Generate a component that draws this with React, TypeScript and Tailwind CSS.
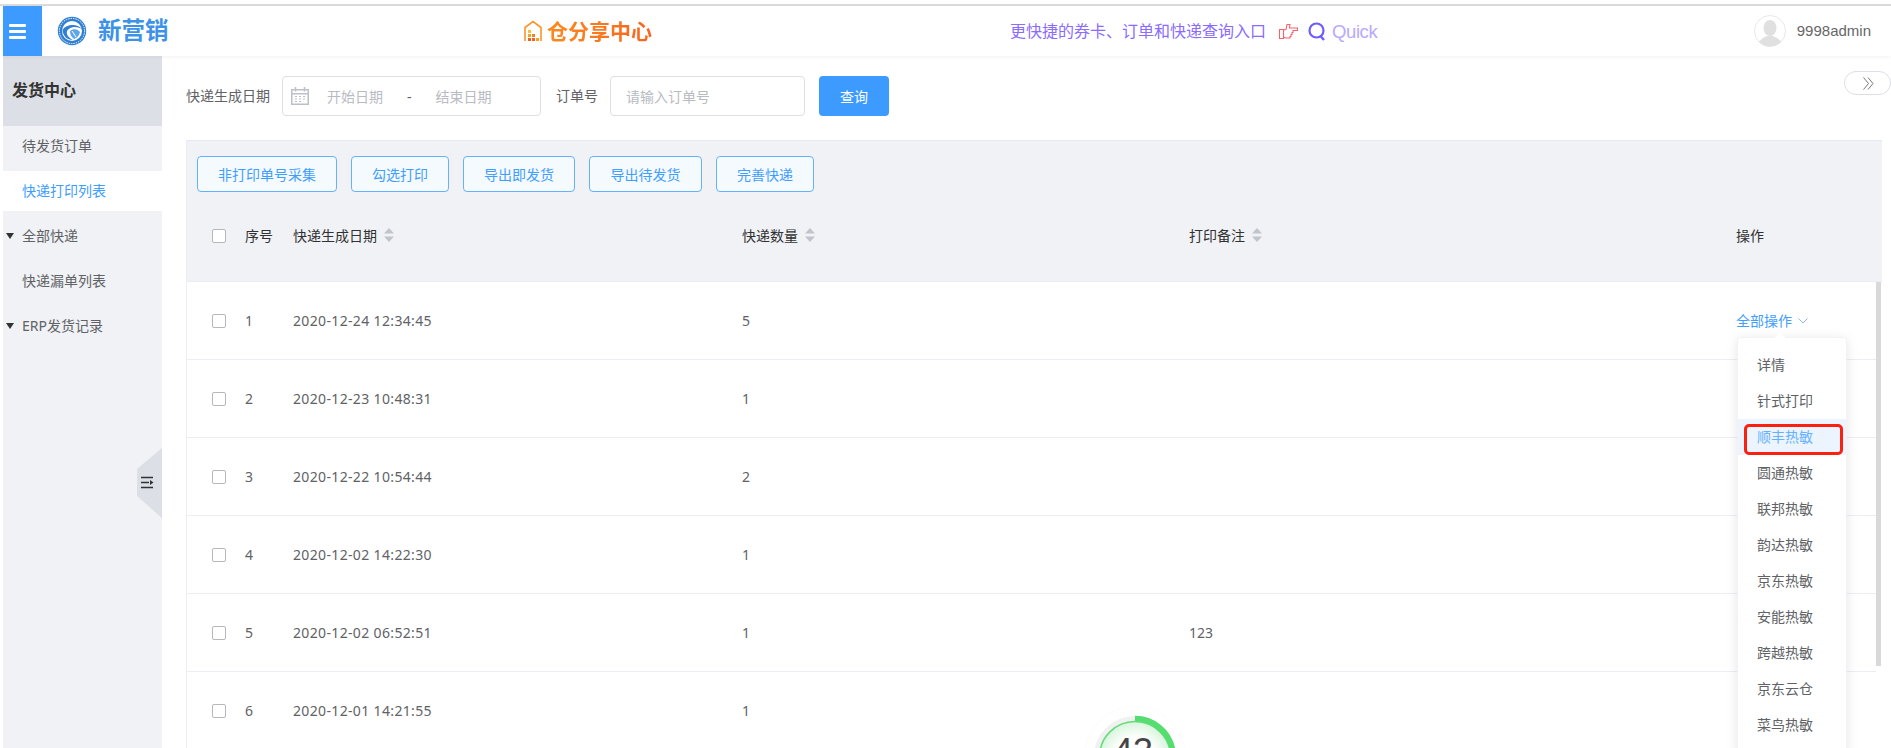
import React from "react";

const Caret = () => (
  <svg width="10" height="14" viewBox="0 0 10 14" className="ml-[7px] shrink-0">
    <path d="M5 0 L10 5.5 H0 Z M5 14 L10 8.5 H0 Z" fill="#c0c4cc" />
  </svg>
);

const Check = () => <span className="block w-[14px] h-[14px] border border-[#b4b7bd] rounded-[2px] bg-white" />;

const Tri = () => (
  <svg width="8" height="6" viewBox="0 0 8 6" className="absolute left-[6px] top-1/2 -translate-y-1/2">
    <path d="M0 0 H8 L4 6 Z" fill="#333" />
  </svg>
);

const Logo = () => (
  <svg width="30" height="30" viewBox="0 0 30 30" className="shrink-0">
    <circle cx="15" cy="15" r="14.2" fill="#2f7fd3" />
    <circle cx="15" cy="15" r="12.6" fill="none" stroke="#fff" strokeWidth="1" strokeDasharray="1.4 1" />
    <circle cx="15" cy="15" r="10" fill="#fff" />
    <path d="M5.5 14 C9 8 20 7 25 13 C20 10 13 10 10 15 C9 19 12 22 16 24 C10 24 6 20 5.5 14 Z" fill="#2f7fd3" />
    <path d="M13 15 C16 12 21 13 23 16 C22 20 20 22 17 23 C14 21 13 18 13 15 Z" fill="#5fa6e6" />
    <path d="M15 15 L19 21" stroke="#fff" strokeWidth="1" />
  </svg>
);

const House = () => (
  <svg width="18" height="22" viewBox="0 0 18 22" className="shrink-0">
    <path d="M1 21 V7.5 L9 1.5 L17 7.5 V21" fill="none" stroke="#f9952a" strokeWidth="1.6" />
    <rect x="4" y="18" width="3" height="3" fill="#f0641e" />
    <rect x="8" y="18" width="3" height="3" fill="#f0641e" />
    <rect x="12" y="18" width="3" height="3" fill="#f6a12b" />
    <rect x="4" y="14" width="3" height="3" fill="#f6a12b" />
    <rect x="8" y="14" width="3" height="3" fill="#f0841e" />
    <rect x="4" y="10" width="3" height="3" fill="#fbc02d" />
  </svg>
);

const Hand = () => (
  <svg width="19" height="15" viewBox="0 0 19 15" className="shrink-0">
    <path
      d="M0.5 5.5 H4.5 V14.5 H0.5 Z M4.5 6 L7 5.5 L8 0.5 L11 0.5 L10.5 4 H18.5 V6.5 H14 V8.5 H13 V10.5 H12 V12.5 H11 V14 H6.5 L4.5 13"
      fill="none"
      stroke="#f8626c"
      strokeWidth="1.1"
    />
  </svg>
);

const CalendarIcon = () => (
  <svg width="18" height="18" viewBox="0 0 18 18" className="shrink-0">
    <path d="M0.75 2.75 H17.25 V17.25 H0.75 Z M0.75 6.75 H17.25" fill="none" stroke="#bcc0c8" strokeWidth="1.5" />
    <path d="M4.5 0 V4.5 M13.5 0 V4.5" stroke="#bcc0c8" strokeWidth="1.5" />
    <path d="M4 9.5 H6 M8 9.5 H10 M12 9.5 H14 M4 12 H6 M8 12 H10 M12 12 H14 M4 14.5 H6 M8 14.5 H10" stroke="#bcc0c8" strokeWidth="1.2" />
  </svg>
);

const rows = [
  ["1", "2020-12-24 12:34:45", "5", ""],
  ["2", "2020-12-23 10:48:31", "1", ""],
  ["3", "2020-12-22 10:54:44", "2", ""],
  ["4", "2020-12-02 14:22:30", "1", ""],
  ["5", "2020-12-02 06:52:51", "1", "123"],
  ["6", "2020-12-01 14:21:55", "1", ""],
];

const menu = ["详情", "针式打印", "顺丰热敏", "圆通热敏", "联邦热敏", "韵达热敏", "京东热敏", "安能热敏", "跨越热敏", "京东云仓", "菜鸟热敏"];
const tools = [
  ["非打印单号采集", "w-[140px]"],
  ["勾选打印", "w-[98px]"],
  ["导出即发货", "w-[112px]"],
  ["导出待发货", "w-[113px]"],
  ["完善快递", "w-[98px]"],
];

const Dropdown = () => (
  <div className="absolute left-[1px] top-[27px] z-10 w-[110px] bg-white rounded-[4px] border border-[#f2f3f6] shadow-[0_2px_12px_rgba(0,0,0,0.1)] pt-[9px] pb-[10px]">
    <span className="absolute -top-[4px] left-[38px] w-[8px] h-[8px] rotate-45 bg-white" />
    {menu.map((m) =>
      m === "顺丰热敏" ? (
        <div key={m} className="relative h-[36px] bg-[#ecf5ff] text-[#66b1ff] pl-[19px] leading-[36px]">
          {m}
          <span className="absolute left-[6px] right-[3px] top-[5px] bottom-0 border-[3px] border-[#fb2010] rounded-[5px]" />
        </div>
      ) : (
        <div key={m} className="h-[36px] text-[#606266] pl-[19px] leading-[36px]">
          {m}
        </div>
      ),
    )}
  </div>
);

export default function App() {
  return (
    <div className="relative w-[1891px] h-[748px] overflow-hidden bg-white text-[14px] text-[#606266] font-['Noto_Sans','Noto_Sans_CJK_SC',sans-serif]">
      <div className="h-[4px]" />
      <div className="h-[2px] bg-[#dcdcdf]" />

      <div className="pl-[3px] flex flex-col h-[742px]">
        <header className="relative z-20 h-[50px] flex items-center bg-white shadow-[0_1px_4px_rgba(0,0,0,0.06)] shrink-0">
          <div className="w-[39px] h-full bg-[#3d9bff] flex flex-col justify-center gap-[3px] pl-[6px]">
            <span className="block w-[17px] h-[3px] rounded-[1px] bg-white" />
            <span className="block w-[17px] h-[3px] rounded-[1px] bg-white" />
            <span className="block w-[17px] h-[3px] rounded-[1px] bg-white" />
          </div>
          <div className="ml-[15px] flex items-center gap-[11px] w-[181px]">
            <Logo />
            <span className="text-[23.5px] font-bold text-[#3d92e8] leading-none whitespace-nowrap">新营销</span>
          </div>
          <div className="ml-[286px] flex items-center gap-[5px] w-[486px]">
            <House />
            <span className="text-[21px] font-bold leading-none whitespace-nowrap bg-linear-to-r from-[#fb8a1e] to-[#f8641e] bg-clip-text text-transparent">仓分享中心</span>
          </div>
          <span className="text-[16px] text-[#8a6cff] whitespace-nowrap">更快捷的券卡、订单和快递查询入口</span>
          <span className="ml-[13px]"><Hand /></span>
          <svg width="18" height="19" viewBox="0 0 18 19" className="ml-[10px] shrink-0">
            <circle cx="8.5" cy="8.5" r="7" fill="none" stroke="#6f5cff" strokeWidth="2.2" />
            <path d="M12.5 14 L16 18" stroke="#6f5cff" strokeWidth="2.4" />
          </svg>
          <span className="ml-[6px] mt-[2px] text-[18.5px] text-[#b9a9ff] font-['Liberation_Sans',sans-serif] tracking-[-0.4px]">Quick</span>
          <div className="ml-auto flex items-center gap-[11px] pr-[20px]">
            <svg width="32" height="32" viewBox="0 0 32 32" className="shrink-0">
              <defs>
                <clipPath id="av"><circle cx="16" cy="16" r="15.5" /></clipPath>
              </defs>
              <circle cx="16" cy="16" r="15.5" fill="#fff" stroke="#e8e8ea" />
              <g clipPath="url(#av)">
                <ellipse cx="16" cy="13" rx="6.5" ry="8" fill="#e0e0e0" />
                <path d="M3 32 C4 25 9 23 13 21 H19 C23 23 28 25 29 32 Z" fill="#e0e0e0" />
              </g>
            </svg>
            <span className="text-[#666] text-[15px] font-['Liberation_Sans',sans-serif] whitespace-nowrap">9998admin</span>
          </div>
        </header>

        <div className="flex flex-1 min-h-0">
          <aside className="relative w-[159px] shrink-0 bg-[#f0f2f5] text-[#606266]">
            <div className="h-[70px] bg-[#dcdfe6] flex items-center pl-[9px] pb-[2px] text-[16px] font-bold text-[#333]">发货中心</div>
            <div className="h-[45px] flex items-center pl-[19px] pb-[6px]">待发货订单</div>
            <div className="h-[40px] bg-white flex items-center pl-[19px] pb-[2px] text-[#409eff]">快递打印列表</div>
            <div className="relative -left-[3px] h-[50px] flex items-center pl-[22px] pb-[2px] text-[#606266]"><Tri />全部快递</div>
            <div className="h-[40px] flex items-center pl-[19px] pb-[2px]">快递漏单列表</div>
            <div className="relative -left-[3px] h-[50px] flex items-center pl-[22px] pb-[2px]"><Tri />ERP发货记录</div>
            <svg width="25" height="70" viewBox="0 0 25 70" className="absolute right-0 top-[392px]">
              <path d="M25 0 L0 21 V48 L25 70 Z" fill="#dcdfe6" />
              <path d="M4 29.5 H16 M4 34.5 H12 M4 39.5 H16" stroke="#303133" strokeWidth="1.6" />
              <path d="M13 32 L16.5 34.5 L13 37 Z" fill="#303133" />
            </svg>
          </aside>

          <main className="relative flex-1 min-w-0 pl-[24px] pr-[9px]">
            <div className="h-[84px] flex items-start pt-[20px]">
              <span className="h-[40px] leading-[40px] whitespace-nowrap">快递生成日期</span>
              <div className="ml-[12px] w-[259px] h-[40px] border border-[#dcdfe6] rounded-[4px] flex items-center pl-[8px] text-[#b8bbc2]">
                <CalendarIcon />
                <span className="ml-[18px] w-[56px] whitespace-nowrap">开始日期</span>
                <span className="ml-[24px] text-[#606266]">-</span>
                <span className="ml-[24px] whitespace-nowrap">结束日期</span>
              </div>
              <span className="ml-[15px] h-[40px] leading-[40px] whitespace-nowrap">订单号</span>
              <div className="ml-[12px] w-[195px] h-[40px] border border-[#dcdfe6] rounded-[4px] flex items-center pl-[15px] text-[#b8bbc2] whitespace-nowrap">请输入订单号</div>
              <button className="ml-[14px] w-[70px] h-[40px] rounded-[4px] bg-[#3d9bff] text-white">查询</button>
            </div>

            <div className="absolute right-0 top-[15px] w-[47px] h-[24px] border border-[#dcdfe6] rounded-[12px] bg-white flex items-center pl-[18px]">
              <svg width="11" height="13" viewBox="0 0 11 13">
                <path d="M0.5 0.5 L5.5 6.5 L0.5 12.5 M5 0.5 L10 6.5 L5 12.5" fill="none" stroke="#777" strokeWidth="1" />
              </svg>
            </div>

            <section className="border-l border-[#ebeef5]">
              <div className="bg-[#f0f2f5] border-t border-[#e6e9ef] border-b border-b-[#e9ecf2]">
                <div className="flex gap-[14px] pl-[10px] pt-[15px]">
                  {tools.map(([t, w]) => (
                    <button key={t} className={`${w} h-[36px] rounded-[4px] border border-[#66b1ff] bg-[#f5faff] text-[#409eff]`}>{t}</button>
                  ))}
                </div>
                <div className="h-[89px] pb-[3px] grid grid-cols-[33px_48px_449px_447px_547px_1fr] items-center pl-[25px] text-[#303133]">
                  <span className="pt-[2px]"><Check /></span>
                  <span>序号</span>
                  <span className="flex items-center">快递生成日期<Caret /></span>
                  <span className="flex items-center">快递数量<Caret /></span>
                  <span className="flex items-center">打印备注<Caret /></span>
                  <span>操作</span>
                </div>
              </div>
              <div className="flex">
                <div className="flex-1 min-w-0">
                  {rows.map(([n, d, q, note], i) => (
                    <div key={n} className="h-[78px] border-b border-[#ebeef5] grid grid-cols-[33px_48px_449px_447px_547px_1fr] items-center pl-[25px]">
                      <Check />
                      <span>{n}</span>
                      <span className="whitespace-nowrap tracking-[0.35px]">{d}</span>
                      <span>{q}</span>
                      <span>{note}</span>
                      {i === 0 ? (
                        <div className="relative text-[#409eff] flex items-center whitespace-nowrap">
                          全部操作
                          <svg width="10" height="6" viewBox="0 0 10 6" className="ml-[6px]">
                            <path d="M0.5 0.5 L5 5 L9.5 0.5" fill="none" stroke="#8fb9e8" strokeWidth="1" />
                          </svg>
                          <Dropdown />
                        </div>
                      ) : (
                        <span />
                      )}
                    </div>
                  ))}
                </div>
                <div className="w-[6px] shrink-0">
                  <div className="w-[5px] h-[384px] bg-[#d9d9d9]" />
                </div>
              </div>
            </section>
          </main>
        </div>
      </div>

      <div className="absolute left-[1085px] top-[707px] w-[100px] h-[100px] rounded-full bg-white shadow-[0_0_3px_rgba(0,0,0,0.03)] flex items-center justify-center z-30">
        <svg width="100" height="100" viewBox="0 0 100 100" className="absolute inset-0">
          <defs>
            <radialGradient id="gf" cx="50%" cy="50%" r="50%">
              <stop offset="55%" stopColor="#ffffff" />
              <stop offset="100%" stopColor="#d8f5dc" />
            </radialGradient>
          </defs>
          <circle cx="50" cy="50" r="38.5" fill="none" stroke="#f1f1f1" strokeWidth="5" />
          <circle cx="50" cy="50" r="35.5" fill="url(#gf)" stroke="#5fdc78" strokeWidth="1.5" />
          <path d="M50 11.5 A38.5 38.5 0 0 1 66 85" fill="none" stroke="#55dd70" strokeWidth="5.5" />
        </svg>
        <span className="relative text-[36px] text-[#444] leading-none font-['Liberation_Sans',sans-serif] -mt-[10px] -ml-[4px]">43</span>
      </div>
    </div>
  );
}
